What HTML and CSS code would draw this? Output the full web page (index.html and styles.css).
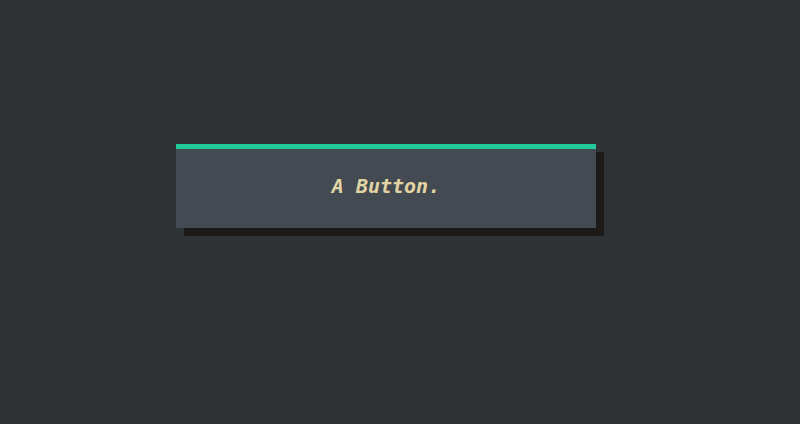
FILE: index.html
```html
<!DOCTYPE html>
<html>
<head>
<meta charset="utf-8">
<link rel="stylesheet" href="styles.css">
</head>
<body>
<main class="stage">
  <button class="btn">A Button.</button>
</main>
</body>
</html>
```

FILE: styles.css
```css
html, body {
  margin: 0;
  padding: 0;
  background: #2f3335;
  width: 800px;
  height: 424px;
  overflow: hidden;
}
.stage {
  padding: 144px 0 0 176px;
}
.btn {
  display: block;
  width: 420px;
  height: 84px;
  box-sizing: border-box;
  margin: 0;
  padding: 0 0 5px 0;
  border: 0;
  border-top: 5px solid #20c997;
  background: #434a51;
  box-shadow: 8px 8px 0 #1c1b1a;
  color: #e2d3a4;
  font-family: "DejaVu Sans Mono", monospace;
  font-style: italic;
  font-weight: bold;
  font-size: 20px;
  text-align: center;
}
```
